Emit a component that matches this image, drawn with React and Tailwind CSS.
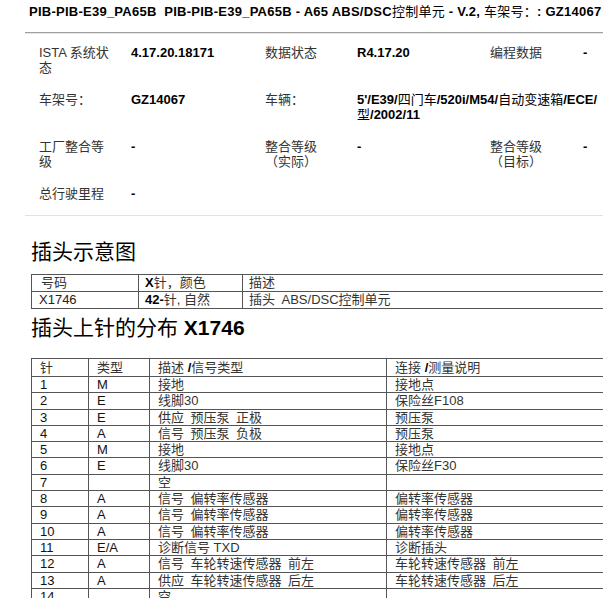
const S = "\u2002";
const rows = [
  ["1", "M", "接地", "接地点"],
  ["2", "E", "线脚30", "保险丝F108"],
  ["3", "E", `供应${S}预压泵${S}正极`, "预压泵"],
  ["4", "A", `信号${S}预压泵${S}负极`, "预压泵"],
  ["5", "M", "接地", "接地点"],
  ["6", "E", "线脚30", "保险丝F30"],
  ["7", "", "空", ""],
  ["8", "A", `信号${S}偏转率传感器`, "偏转率传感器"],
  ["9", "A", `信号${S}偏转率传感器`, "偏转率传感器"],
  ["10", "A", `信号${S}偏转率传感器`, "偏转率传感器"],
  ["11", "E/A", "诊断信号 TXD", "诊断插头"],
  ["12", "A", `信号${S}车轮转速传感器${S}前左`, `车轮转速传感器${S}前左`],
  ["13", "A", `供应${S}车轮转速传感器${S}后左`, `车轮转速传感器${S}后左`],
  ["14", "", "空", ""],
];

function Label({ children }) {
  return <div className="min-h-[30px] pr-[17px] text-[#333]">{children}</div>;
}
function Val({ children }) {
  return <div className="font-bold text-black">{children}</div>;
}

export default function App() {
  return (
    <div className="w-[603px] h-[598px] overflow-hidden bg-white text-[#222] font-['Liberation_Sans','Noto_Sans_CJK_SC',sans-serif]">
      <div className="w-[680px]">
        <div className="pl-[29px] pt-[4px] text-[13px] leading-[16px] font-bold whitespace-pre text-black tracking-[0.25px]">
          {"PIB-PIB-E39_PA65B  PIB-PIB-E39_PA65B - A65 ABS/DSC"}<span className="font-normal">控制单元</span>{" - V.2, "}<span className="font-normal">车架号：</span>{": GZ14067"}
        </div>
        <div className="ml-[25px] mt-[12px] h-px bg-[#a0a0a0]" />
        <div className="ml-[25px] h-px bg-[#e6e6e6]" />

        <div className="pl-[39px] mt-[11px] grid grid-cols-[92px_134px_92px_133px_93px_80px] gap-y-[17px] text-[13px] leading-[15px]">
          <Label>ISTA 系统状态</Label>
          <Val>4.17.20.18171</Val>
          <Label>数据状态</Label>
          <Val>R4.17.20</Val>
          <Label>编程数据</Label>
          <Val>-</Val>

          <Label>车架号：</Label>
          <Val>GZ14067</Val>
          <Label>车辆：</Label>
          <div className="col-span-3 font-bold text-black whitespace-nowrap">
            5'/E39/<span className="font-normal">四门车</span>/520i/M54/<span className="font-normal">自动变速箱</span>/ECE/
            <br />
            <span className="font-normal">型</span>/2002/11
          </div>

          <Label>工厂整合等级</Label>
          <Val>-</Val>
          <Label>整合等级（实际）</Label>
          <Val>-</Val>
          <Label>整合等级（目标）</Label>
          <Val>-</Val>

          <Label>总行驶里程</Label>
          <Val>-</Val>
          <div />
          <div />
          <div />
          <div />
        </div>

        <div className="ml-[25px] mt-[-1px] h-px bg-[#e2e2e2]" />

        <div className="pl-[31px] mt-[24px] text-[21px] leading-[24px] text-black">插头示意图</div>

        <div className="ml-[31px] mt-[10px] w-[620px] border-t border-l border-[#555] text-[13px] leading-[15px]">
          <div className="grid grid-cols-[107px_104px_1fr] h-[17px] border-b border-[#555]">
            <div className="border-r border-[#555] pl-[9px] text-[#333]">号码</div>
            <div className="border-r border-[#555] pl-[6px] text-[#333]"><span className="font-bold text-black">X</span>针，颜色</div>
            <div className="border-r border-[#555] pl-[6px] text-[#333]">描述</div>
          </div>
          <div className="grid grid-cols-[107px_104px_1fr] h-[17px] border-b border-[#555]">
            <div className="border-r border-[#555] pl-[7px] text-[#222]">X1746</div>
            <div className="border-r border-[#555] pl-[6px] text-[#333]"><span className="font-bold text-black">42-</span>针, 自然</div>
            <div className="border-r border-[#555] pl-[6px] text-[#333]">插头{S}ABS/DSC控制单元</div>
          </div>
        </div>

        <div className="pl-[31px] mt-[7px] text-[21px] leading-[24px] text-black whitespace-nowrap">
          插头上针的分布 <span className="font-bold">X1746</span>
        </div>

        <div className="ml-[31px] mt-[18px] w-[620px] border-t border-l border-[#555] text-[13px] leading-[15px]">
          <div className="grid grid-cols-[57px_61px_237px_1fr] h-[18px] border-b border-[#555]">
            <div className="border-r border-[#555] pl-[8px] pt-px text-[#333]">针</div>
            <div className="border-r border-[#555] pl-[8px] pt-px text-[#333]">类型</div>
            <div className="border-r border-[#555] pl-[8px] pt-px text-[#333]">描述 <span className="font-bold text-black">/</span>信号类型</div>
            <div className="border-r border-[#555] pl-[8px] pt-px text-[#333]">连接 <span className="font-bold text-black">/</span>测量说明</div>
          </div>
          {rows.map((r) => (
            <div key={r[0]} className="grid grid-cols-[57px_61px_237px_1fr] h-[16.3px] border-b border-[#555]">
              <div className="border-r border-[#555] pl-[8px] text-[#111]">{r[0]}</div>
              <div className="border-r border-[#555] pl-[8px] text-[#111]">{r[1]}</div>
              <div className="border-r border-[#555] pl-[8px] text-[#333]">{r[2]}</div>
              <div className="border-r border-[#555] pl-[8px] text-[#333]">{r[3]}</div>
            </div>
          ))}
        </div>
      </div>
    </div>
  );
}
